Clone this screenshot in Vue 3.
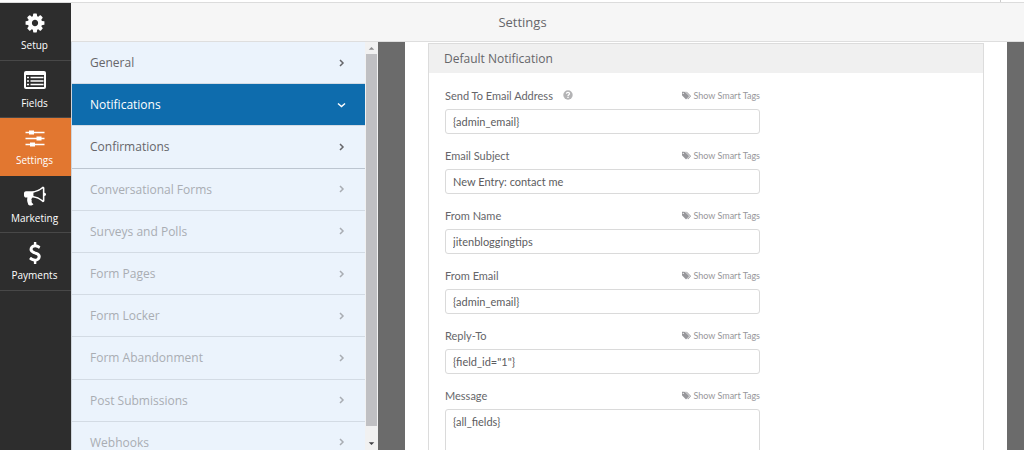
<script setup>
import { ref } from 'vue'

const nav = [
  { id: 'setup', label: 'Setup' },
  { id: 'fields', label: 'Fields' },
  { id: 'settings', label: 'Settings' },
  { id: 'marketing', label: 'Marketing' },
  { id: 'payments', label: 'Payments' }
]
const current = ref('settings')

const sections = [
  { label: 'General' },
  { label: 'Notifications' },
  { label: 'Confirmations', last: true },
  { label: 'Conversational Forms', locked: true },
  { label: 'Surveys and Polls', locked: true },
  { label: 'Form Pages', locked: true },
  { label: 'Form Locker', locked: true },
  { label: 'Form Abandonment', locked: true },
  { label: 'Post Submissions', locked: true },
  { label: 'Webhooks', locked: true }
]
const open = ref('Notifications')

const fields = ref([
  { id: 'to', label: 'Send To Email Address', value: '{admin_email}', help: true },
  { id: 'subject', label: 'Email Subject', value: 'New Entry: contact me' },
  { id: 'from-name', label: 'From Name', value: 'jitenbloggingtips' },
  { id: 'from-email', label: 'From Email', value: '{admin_email}' },
  { id: 'reply', label: 'Reply-To', value: '{field_id="1"}' },
  { id: 'message', label: 'Message', value: '{all_fields}', multiline: true }
])
</script>

<template>
  <div class="builder">
    <div class="strip"><span class="strip-space"></span><span class="strip-end"></span></div>
    <div class="main">
      <nav class="rail" aria-label="Form builder">
        <div class="rail-items">
          <button
            v-for="item in nav"
            :key="item.id"
            type="button"
            class="rail-item"
            :class="{ active: current === item.id }"
            @click="current = item.id"
          >
            <svg v-if="item.id === 'setup'" class="rail-icon" viewBox="0 0 1792 1792" fill="currentColor" aria-hidden="true">
              <path d="M1152 896q0-106-75-181t-181-75-181 75-75 181 75 181 181 75 181-75 75-181zm512-109v222q0 12-8 23t-20 13l-185 28q-19 54-39 91 35 50 107 138 10 12 10 25t-9 23q-27 37-99 108t-94 71q-12 0-26-9l-138-108q-44 23-91 38-16 136-29 186-7 28-36 28h-222q-14 0-24.500-8.500t-11.500-21.500l-28-184q-49-16-90-37l-141 107q-10 9-25 9-14 0-25-11-126-114-165-168-7-10-7-23 0-12 8-23 15-21 51-66.500t54-70.500q-27-50-41-99l-183-27q-13-2-21-12.500t-8-23.500v-222q0-12 8-23t19-13l186-28q14-46 39-92-40-57-107-138-10-12-10-24 0-10 9-23 26-36 98.500-107.500t94.500-71.500q13 0 26 10l138 107q44-23 91-38 16-136 29-186 7-28 36-28h222q14 0 24.500 8.500t11.500 21.500l28 184q49 16 90 37l142-107q9-9 24-9 13 0 25 10 129 119 165 170 7 8 7 22 0 12-8 23-15 21-51 66.500t-54 70.500q26 50 41 98l183 28q13 2 21 12.500t8 23.500z" />
            </svg>
            <svg v-else-if="item.id === 'fields'" class="rail-icon" viewBox="0 0 22 22" aria-hidden="true">
              <rect x="0" y="1" width="22" height="18" rx="2" fill="currentColor" />
              <rect x="2" y="5" width="18" height="12" fill="#2d2d2d" />
              <path d="M3 7.500h2M6.500 7.500h13M3 11h2M6.500 11h13M3 14.500h2M6.500 14.500h13" stroke="currentColor" stroke-width="1.700" />
            </svg>
            <svg v-else-if="item.id === 'settings'" class="rail-icon" viewBox="0 0 22 22" aria-hidden="true">
              <path d="M1.500 5.500h19M1.500 11.500h19M1.500 17.500h19" stroke="currentColor" stroke-width="1.300" />
              <path d="M5 3.500h5v4h-5zM12.500 9.500h5v4h-5zM6 15.500h5v4h-5z" fill="currentColor" />
            </svg>
            <svg v-else-if="item.id === 'marketing'" class="rail-icon" viewBox="0 0 1792 1792" fill="currentColor" aria-hidden="true">
              <path d="M1664 640q53 0 90.500 37.500t37.500 90.500-37.500 90.500-90.500 37.500v384q0 52-38 90t-90 38q-417-347-812-380-58 19-91 66t-31 100.500 40 92.500q-20 33-23 65.500t6 58 33.500 55 48 50 61.500 50.500q-29 58-111.500 83t-168.500 11.500-132-55.500q-7-23-29.500-87.500t-32-94.500-23-89-15-101 3.500-98.500 22-110.500h-122q-66 0-113-47t-47-113v-192q0-66 47-113t113-47h480q435 0 896-384 52 0 90 38t38 90v384zm-128 604v-954q-394 302-768 343v270q377 42 768 341z" />
            </svg>
            <svg v-else class="rail-icon" viewBox="0 0 1792 1792" fill="currentColor" aria-hidden="true">
              <path d="M1362 1185q0 153-99.500 263.500t-258.500 136.500v175q0 14-9 23t-23 9h-135q-13 0-22.500-9.500t-9.500-22.500v-175q-66-9-127.500-31t-101.500-44.500-74-48-46.500-37.500-17.500-18q-17-21-2-41l103-135q7-10 23-12 15-2 24 9l2 2q113 99 243 125 37 8 74 8 81 0 142.500-43t61.500-122q0-28-15-53t-33.500-42-58.500-37.500-66-32-80-32.500q-39-16-61.500-25t-61.500-26.500-62.500-31-56.500-35.500-53.500-42.500-43.500-49-35.500-58-21-66.500-8.500-78q0-138 98-242t255-134v-180q0-13 9.500-22.500t22.500-9.500h135q14 0 23 9t9 23v176q57 6 110.500 23t87 33.500 63.500 37.500 39 29 15 14q17 18 5 38l-81 146q-8 15-23 16-14 3-27-7-3-3-14.500-12t-39-26.500-58.500-32-74.500-26-85.500-11.500q-95 0-155 43t-60 111q0 26 8.500 48t29.500 41.500 39.500 33 56 31 60.500 27 70 27.500q53 20 81 31.500t76 35 75.500 42.500 62 50 53 63.500 31.500 76.500 13 94z" />
            </svg>
            <span>{{ item.label }}</span>
          </button>
        </div>
      </nav>

      <div class="content">
        <header class="topbar"><h1>Settings</h1></header>
        <div class="panels">
          <aside class="sidebar">
            <div class="sections">
              <a
                v-for="s in sections"
                :key="s.label"
                href="#"
                class="section"
                :class="{ active: open === s.label, locked: s.locked, last: s.last }"
                @click.prevent="open = s.label"
              >
                <span>{{ s.label }}</span>
                <svg class="chevron" viewBox="0 0 10 10" fill="none" stroke="currentColor" stroke-width="1.500" aria-hidden="true">
                  <path v-if="open === s.label" d="M2 3.500L5.500 6.500L9 3.500" />
                  <path v-else d="M4 2L7 5L4 8" />
                </svg>
              </a>
            </div>
            <div class="scrollbar" aria-hidden="true">
              <svg class="arrow" viewBox="0 0 12 12"><path d="M3 8L6 5L9 8z" fill="#8c8c8e" /></svg>
              <div class="thumb"></div>
              <svg class="arrow arrow-down" viewBox="0 0 12 24"><path d="M3 16.500L6 19.500L9 16.500z" fill="#404044" /></svg>
            </div>
          </aside>

          <main class="stage">
            <div class="sheet">
              <section class="card">
                <h2>Default Notification</h2>
                <form class="fields" @submit.prevent>
                  <div v-for="f in fields" :key="f.id" class="field">
                    <div class="field-head">
                      <label :for="f.id">{{ f.label }}</label>
                      <svg v-if="f.help" class="help" viewBox="0 0 10 10" role="img" aria-label="Help">
                        <circle cx="5" cy="5" r="4.700" fill="#b3b3b5" />
                        <path d="M3.400 3.700C3.500 2 6.600 2 6.500 3.800C6.400 4.800 5 4.700 5 6" fill="none" stroke="#fff" stroke-width="1.300" />
                        <path d="M4.300 6.800h1.400v1.200h-1.400z" fill="#fff" />
                      </svg>
                      <a href="#" class="tags" @click.prevent>
                        <svg viewBox="0 0 1850 1792" fill="currentColor" aria-hidden="true">
                          <path d="M384 448q0-53-37.500-90.500t-90.500-37.500-90.500 37.500-37.500 90.500 37.500 90.500 90.500 37.500 90.500-37.500 37.500-90.500zm1067 576q0 53-37 90l-491 492q-39 37-91 37-53 0-90-37l-715-716q-38-37-64.500-101t-26.500-117v-416q0-52 38-90t90-38h416q53 0 117 26.500t102 64.500l715 714q37 39 37 91zm384 0q0 53-37 90l-491 492q-39 37-91 37-36 0-59-14t-53-45l470-470q37-37 37-90 0-52-37-91l-715-714q-38-38-102-64.500t-117-26.500h224q53 0 117 26.500t102 64.500l715 714q37 39 37 91z" />
                        </svg>
                        <span>Show Smart Tags</span>
                      </a>
                    </div>
                    <textarea v-if="f.multiline" :id="f.id" v-model="f.value" rows="5"></textarea>
                    <input v-else :id="f.id" v-model="f.value" type="text" />
                  </div>
                </form>
              </section>
            </div>
          </main>
        </div>
      </div>
    </div>
  </div>
</template>

<style>
body {
  margin: 0;
  overflow: hidden;
}
</style>

<style scoped>
* {
  box-sizing: border-box;
}
.builder {
  display: flex;
  flex-direction: column;
  height: 100vh;
  overflow: hidden;
  background: #fff;
  color: #66666a;
  font-family: "Open Sans", "Noto Sans", sans-serif;
  font-size: 11px;
}
button,
input,
textarea {
  font: inherit;
}
a {
  color: inherit;
  text-decoration: none;
}
.strip {
  display: flex;
  flex: none;
  height: 3px;
  border-bottom: 1px solid #dcdcdc;
}
.strip-space {
  flex: 1;
}
.strip-end {
  width: 24px;
  border-left: 1px solid #ccc;
}
.main {
  display: flex;
  flex: 1;
  min-height: 0;
}
.rail {
  flex: none;
  width: 71px;
  background: #2d2d2d;
}
.rail-items {
  display: grid;
  grid-template-rows: repeat(5, 1fr);
  height: 288px;
}
.rail-item {
  display: flex;
  flex-direction: column;
  align-items: center;
  gap: 3px;
  padding: 9px 2px 0 0;
  border: 0;
  border-bottom: 1px solid #484848;
  background: none;
  color: #fff;
  font-size: 10px;
  line-height: 16px;
}
.rail-item.active {
  background: #e27730;
  border-color: #e27730;
}
.rail-icon {
  width: 22px;
  height: 22px;
}
.content {
  display: flex;
  flex: 1;
  flex-direction: column;
  min-width: 0;
}
.topbar {
  flex: none;
  height: 39px;
  border-bottom: 1px solid #dedede;
  background: #f6f6f6;
}
h1 {
  margin: 0;
  padding-right: 50px;
  font-size: 13px;
  font-weight: 400;
  line-height: 38px;
  text-align: center;
}
.panels {
  display: flex;
  flex: 1;
  min-height: 0;
}
.sidebar {
  display: flex;
  flex: none;
  width: 307px;
  overflow: hidden;
  background: #ebf3fc;
  border-left: 1px solid #cfd5dc;
}
.sections {
  display: grid;
  grid-template-rows: repeat(10, 1fr);
  flex: 1;
  height: 422px;
}
.section {
  display: flex;
  align-items: center;
  justify-content: space-between;
  padding: 0 19px 0 18px;
  border-bottom: 1px solid #d3dbe4;
  font-size: 12px;
}
.section.active {
  background: #0e6cad;
  color: #fff;
}
.section.last {
  border-color: #bcc5d0;
}
.section.locked {
  color: #a9adb3;
}
.chevron {
  width: 10px;
  height: 10px;
}
.scrollbar {
  display: flex;
  flex-direction: column;
  width: 13px;
  padding: 0 1px;
  background: #f1f1f1;
}
.arrow {
  flex: none;
  width: 11px;
  height: 12px;
}
.arrow-down {
  height: 24px;
}
.thumb {
  flex: 1;
  background: #c0c0c3;
}
.stage {
  display: flex;
  flex: 1;
  min-width: 0;
  padding: 0 17px 0 27px;
  background: #6b6b6b;
}
.sheet {
  flex: 1;
  min-width: 0;
  padding: 1px 23px 0;
  background: #fff;
}
.card {
  border: 1px solid #dcdcdc;
}
h2 {
  margin: 0;
  padding: 0 15px;
  background: #f0f0f0;
  font-size: 12px;
  font-weight: 400;
  line-height: 29px;
}
.fields {
  max-width: 347px;
  padding: 13px 16px;
  font-family: Lato, "Open Sans", sans-serif;
}
.field {
  height: 60px;
}
.field-head {
  display: flex;
  align-items: center;
  height: 18px;
  margin-bottom: 5px;
}
.help {
  width: 10px;
  height: 10px;
  margin-left: 10px;
}
.tags {
  display: flex;
  align-items: center;
  gap: 2px;
  margin-left: auto;
  color: #97979b;
  font-size: 9px;
}
.tags svg {
  width: 9px;
  height: 9px;
}
input,
textarea {
  display: block;
  width: 100%;
  margin: 0;
  padding: 0 7px;
  border: 1px solid #dadada;
  border-radius: 3px;
  background: #fff;
  color: #5c5c60;
  outline: none;
}
input {
  height: 25px;
}
textarea {
  padding-top: 5px;
  resize: none;
}
</style>
